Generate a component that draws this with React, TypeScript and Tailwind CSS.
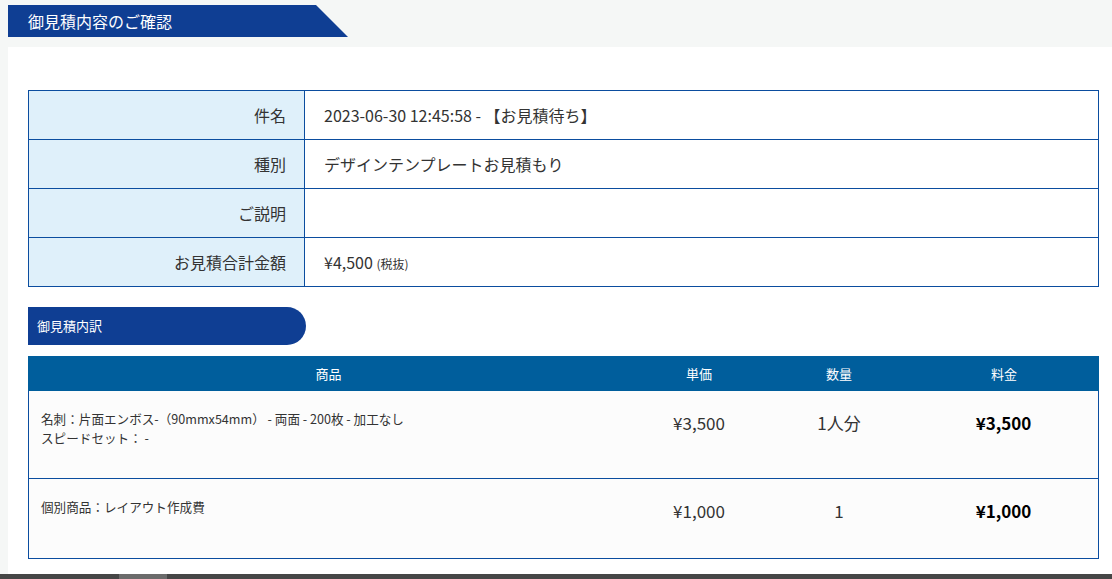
import React from 'react';

const font = { fontFamily: '"Noto Sans CJK JP", "Noto Sans", sans-serif' };

const summary = [
  { label: '件名', value: <span>2023-06-30 12:45:58 - 【お見積待ち】</span> },
  { label: '種別', value: <span>デザインテンプレートお見積もり</span> },
  { label: 'ご説明', value: <span></span> },
  {
    label: 'お見積合計金額',
    value: (
      <span>
        ¥4,500 <span className="text-[12px]">(税抜)</span>
      </span>
    ),
  },
];

const items = [
  {
    name: ['名刺：片面エンボス-（90mmx54mm） - 両面 - 200枚 - 加工なし', 'スピードセット： -'],
    price: '¥3,500',
    qty: '1人分',
    total: '¥3,500',
    h: 'h-[87px]',
  },
  {
    name: ['個別商品：レイアウト作成費'],
    price: '¥1,000',
    qty: '1',
    total: '¥1,000',
    h: 'h-[80px] border-t border-[#0b4d9f]',
  },
];

export default function App() {
  return (
    <div className="h-[579px] w-[1112px] overflow-hidden bg-[#f5f7f6] flex flex-col text-[#333]" style={font}>
      <div className="pl-2 pt-[5px]">
        <div className="w-[340px] h-[32px] bg-[#0f3e93] text-white text-[16px] pl-5 flex items-center [clip-path:polygon(0_0,308px_0,100%_100%,0_100%)]">
          御見積内容のご確認
        </div>
      </div>

      <div className="ml-2 mt-[10px] flex-1 bg-white pl-5 pt-[43px]">
        {/* summary table */}
        <div className="w-[1071px] border border-[#0b4d9f]">
          {summary.map((row, i) => (
            <div key={row.label} className={i > 0 ? 'flex h-[49px] border-t border-[#0b4d9f]' : 'flex h-[48px]'}>
              <div className="w-[276px] shrink-0 bg-[#dff0fa] border-r border-[#0b4d9f] flex items-center justify-end pr-[18px] text-[16px]">
                {row.label}
              </div>
              <div className="flex-1 flex items-center pl-[19px] text-[16px]">{row.value}</div>
            </div>
          ))}
        </div>

        <div className="mt-5 w-[278px] h-[38px] bg-[#0f3e93] rounded-r-full text-white text-[13px] pl-[9px] flex items-center">
          御見積内訳
        </div>

        {/* detail table */}
        <div className="mt-[11px] w-[1071px] border-x border-b border-[#0b4d9f]">
          <div className="flex h-[35px] bg-[#005e9c] text-white text-[13px] -mx-px">
            <div className="w-[601px] flex items-center justify-center">商品</div>
            <div className="w-[140px] flex items-center justify-center">単価</div>
            <div className="w-[140px] flex items-center justify-center">数量</div>
            <div className="flex-1 flex items-center justify-center">料金</div>
          </div>
          {items.map((it, i) => (
            <div key={i} className={`flex bg-[#fcfcfc] ${it.h}`}>
              <div className="w-[600px] pl-3 pt-[18px] text-[12.6px] leading-[19px]">
                {it.name.map((l) => (
                  <div key={l}>{l}</div>
                ))}
              </div>
              <div className="w-[140px] text-center pt-[19px] text-[17px] leading-[26px]">{it.price}</div>
              <div className="w-[140px] text-center pt-[19px] text-[17px] leading-[26px]">{it.qty}</div>
              <div className="flex-1 text-center pt-[19px] text-[17px] leading-[26px] font-bold text-black">{it.total}</div>
            </div>
          ))}
        </div>
      </div>

      <div className="h-[5px] bg-[#464646] flex shrink-0">
        <div className="ml-[119px] w-[48px] bg-[#6b6b6b]"></div>
      </div>
    </div>
  );
}
